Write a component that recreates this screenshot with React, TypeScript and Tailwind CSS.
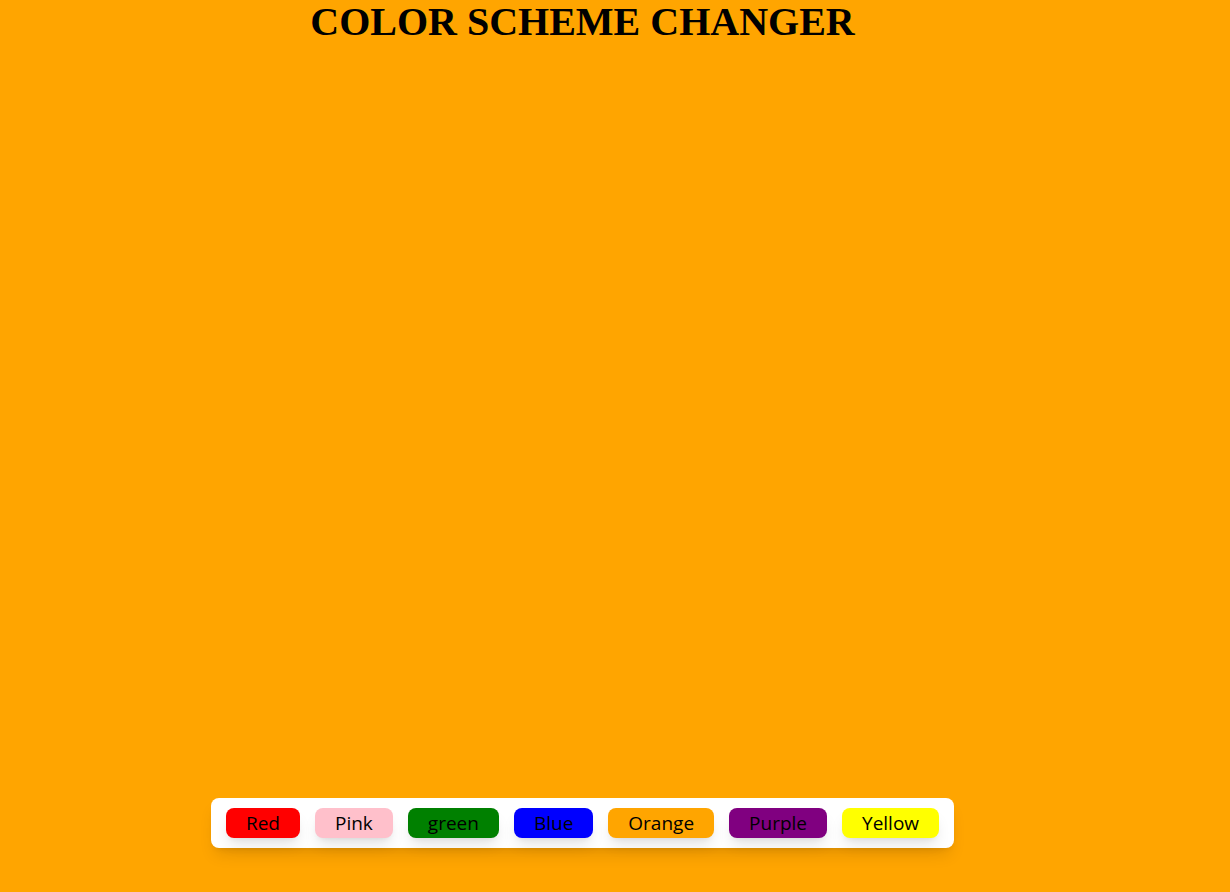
const colors = [
  { name: "Red", bg: "bg-[#ff0000]" },
  { name: "Pink", bg: "bg-[#ffc0cb]" },
  { name: "green", bg: "bg-[#008000]" },
  { name: "Blue", bg: "bg-[#0000ff]" },
  { name: "Orange", bg: "bg-[#ffa500]" },
  { name: "Purple", bg: "bg-[#800080]" },
  { name: "Yellow", bg: "bg-[#ffff00]" },
];

export default function App() {
  return (
    <div className="h-screen w-full bg-[#ffa500]">
      <div className="flex h-full w-[1165px] flex-col items-center justify-between">
        <h1 className="font-['Liberation_Serif',serif] text-[40px] font-bold leading-[44px] text-black">
          COLOR SCHEME CHANGER
        </h1>
        <div className="mb-[44px] flex gap-[15px] rounded-lg bg-white px-[15px] py-[10px] shadow-lg">
          {colors.map((c) => (
            <button
              key={c.name}
              className={`${c.bg} rounded-lg px-5 py-px font-['Open_Sans',sans-serif] text-[19px] leading-7 text-black shadow-lg`}
            >
              {c.name}
            </button>
          ))}
        </div>
      </div>
    </div>
  );
}
